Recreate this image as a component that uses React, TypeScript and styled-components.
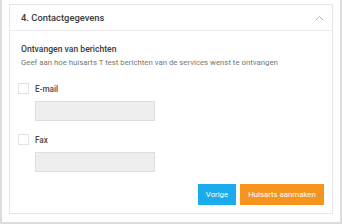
import styled, { createGlobalStyle } from 'styled-components';

const GlobalStyle = createGlobalStyle`
  html, body {
    margin: 0;
    padding: 0;
    background: #ffffff;
  }
  * {
    box-sizing: border-box;
  }
`;

const Frame = styled.div`
  width: 342px;
  height: 224px;
  border: 2px solid #dcdcdc;
  border-top: none;
  padding: 4px 7px 8px 7px;
  font-family: Roboto, 'Liberation Sans', sans-serif;
  background: #ffffff;
`;

const Card = styled.section`
  height: 100%;
  border: 1px solid #e6e6e6;
  display: flex;
  flex-direction: column;
`;

const Header = styled.div`
  height: 26px;
  border-bottom: 1px solid #ececec;
  display: flex;
  align-items: center;
  justify-content: space-between;
  padding: 0 8px 0 11px;
`;

const HeaderTitle = styled.h2`
  margin: 0;
  font-size: 9.4px;
  font-weight: 500;
  color: #3a3a3a;
`;

const Body = styled.div`
  flex: 1;
  display: flex;
  flex-direction: column;
  padding: 12px 8px 8px 8px;
`;

const Title = styled.div`
  font-size: 8.6px;
  line-height: 12px;
  font-weight: 500;
  color: #3a3a3a;
  margin-left: 3px;
`;

const Description = styled.div`
  font-size: 7.8px;
  line-height: 12px;
  color: #777777;
  margin: 2px 0 0 3px;
`;

const Option = styled.label<{ $first?: boolean }>`
  display: flex;
  align-items: center;
  gap: 6px;
  margin-top: ${(p) => (p.$first ? '14px' : '13px')};
  font-size: 8.2px;
  font-weight: 500;
  color: #4a4a4a;
`;

const Box = styled.span`
  width: 11px;
  height: 11px;
  border: 1px solid #e2e2e2;
  background: #ffffff;
`;

const Field = styled.div`
  width: 120px;
  height: 20px;
  margin: 7px 0 0 17px;
  background: #eeeeee;
  border: 1px solid #dddddd;
`;

const Actions = styled.div`
  margin-top: auto;
  display: flex;
  justify-content: flex-end;
  gap: 4px;
`;

const Button = styled.button<{ $color: string; $width: number }>`
  width: ${(p) => p.$width}px;
  height: 21px;
  border: none;
  padding: 0;
  background: ${(p) => p.$color};
  color: #ffffff;
  font-family: Roboto, 'Liberation Sans', sans-serif;
  font-size: 7.8px;
  font-weight: 400;
`;

export default function App() {
  return (
    <>
      <GlobalStyle />
      <Frame>
        <Card>
          <Header>
            <HeaderTitle>4. Contactgegevens</HeaderTitle>
            <svg width='9' height='6' viewBox='0 0 9 6'>
              <path d='M1 5 L4.5 1.5 L8 5' fill='none' stroke='#b5b5b5' strokeWidth='1' />
            </svg>
          </Header>
          <Body>
            <Title>Ontvangen van berichten</Title>
            <Description>
              Geef aan hoe huisarts T test berichten van de services wenst te ontvangen
            </Description>
            <Option $first>
              <Box />
              E-mail
            </Option>
            <Field />
            <Option>
              <Box />
              Fax
            </Option>
            <Field />
            <Actions>
              <Button $color='#1aabed' $width={38}>Vorige</Button>
              <Button $color='#f7941e' $width={84}>Huisarts aanmaken</Button>
            </Actions>
          </Body>
        </Card>
      </Frame>
    </>
  );
}
